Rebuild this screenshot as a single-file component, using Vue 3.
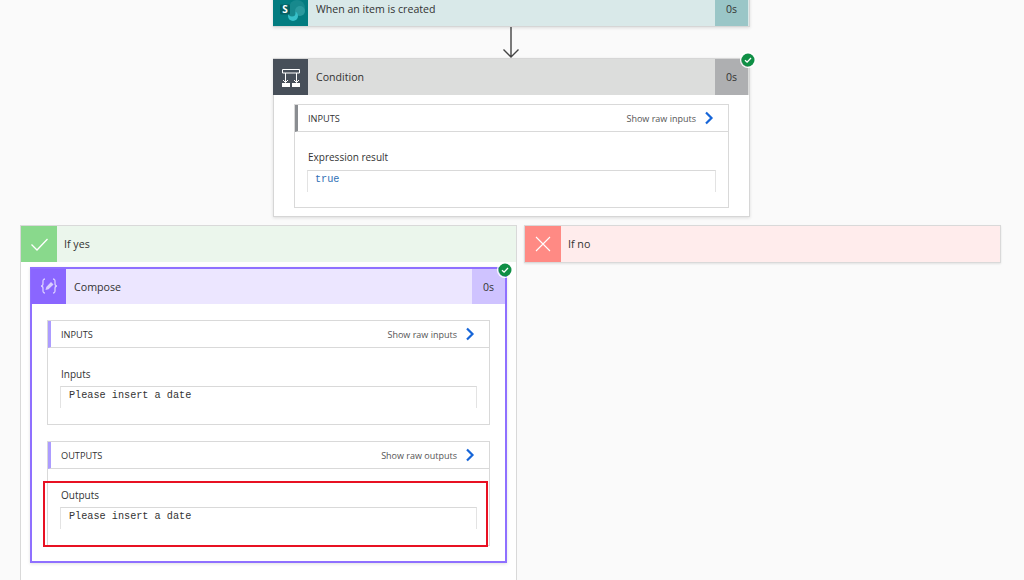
<script setup>
const composeSections = [
  { title: 'INPUTS', raw: 'Show raw inputs', label: 'Inputs', value: 'Please insert a date' },
  { title: 'OUTPUTS', raw: 'Show raw outputs', label: 'Outputs', value: 'Please insert a date' }
]
</script>

<template>
  <main class="canvas">
    <section class="card trigger">
      <header class="head">
        <div class="icon">
          <svg width="36" height="36" viewBox="0 0 36 36">
            <circle cx="24" cy="17" r="8" fill="#17898d"/>
            <circle cx="27" cy="20" r="5" fill="#2a9a9e"/>
            <circle cx="20" cy="25" r="5" fill="#37c0c8"/>
            <circle cx="19" cy="22" r="3.500" fill="#17898d"/>
            <rect x="7" y="13.500" width="10" height="10" rx="1" fill="#045f62"/>
            <text x="12" y="22" class="s-glyph">S</text>
          </svg>
        </div>
        <span class="name">When an item is created</span>
        <span class="time">0s</span>
      </header>
    </section>

    <div class="arrow">
      <svg width="18" height="31" viewBox="0 0 18 31">
        <path d="M9 0V30M1.500 22.500L9 30L16.500 22.500" fill="none" stroke="#444" stroke-width="1.400"/>
      </svg>
    </div>

    <section class="card condition">
      <header class="head">
        <div class="icon">
          <svg width="36" height="36" viewBox="0 0 36 36">
            <path d="M9.500 10.500H26.500V14H9.500Z" fill="none" stroke="#fff" stroke-width="1"/>
            <path d="M12.500 14V23.500M23.500 14V23.500M10 21L12.500 23.500L15 21M21 21L23.500 23.500L26 21" fill="none" stroke="#fff" stroke-width="1"/>
            <path d="M9 24H17V28H9ZM19 24H27V28H19Z" fill="#fff"/>
          </svg>
        </div>
        <span class="name">Condition</span>
        <span class="time">0s</span>
      </header>
      <span class="badge">
        <svg width="14" height="14" viewBox="0 0 14 14"><circle cx="7" cy="7" r="6.500" fill="#0f8f45"/><path d="M4 7.200L6.100 9.200L10 5" fill="none" stroke="#fff" stroke-width="1.300"/></svg>
      </span>
      <div class="body cond-body">
        <div class="section">
          <div class="sec-head">
            <span class="sec-title">INPUTS</span>
            <span class="raw">Show raw inputs</span>
            <svg class="chev" width="10" height="14" viewBox="0 0 10 14"><path d="M2 1.500L7.500 7L2 12.500" fill="none" stroke="#1665d8" stroke-width="2.200"/></svg>
          </div>
          <div class="sec-body">
            <div class="label">Expression result</div>
            <div class="value true">true</div>
          </div>
        </div>
      </div>
    </section>

    <div class="branches">
      <section class="branch yes">
        <header class="branch-head">
          <div class="branch-icon">
            <svg width="36" height="36" viewBox="0 0 36 36"><path d="M10.500 18.500L16 24L26.500 13" fill="none" stroke="#fff" stroke-width="1.300"/></svg>
          </div>
          <span class="name">If yes</span>
        </header>
        <div class="branch-body">
          <section class="card compose">
            <header class="head">
              <div class="icon">
                <svg width="36" height="36" viewBox="0 0 36 36">
                  <path d="M14 10C11.500 10 12 12.500 12 14.500C12 16.500 11.500 17 10 17C11.500 17 12 17.500 12 19.500C12 21.500 11.500 24 14 24M22 10C24.500 10 24 12.500 24 14.500C24 16.500 24.500 17 26 17C24.500 17 24 17.500 24 19.500C24 21.500 24.500 24 22 24" fill="none" stroke="#d9ceff" stroke-width="1.300"/>
                  <path d="M14.500 21L15.300 18L20 13L22.500 15.500L17.500 20.300Z" fill="#d9ceff"/>
                </svg>
              </div>
              <span class="name">Compose</span>
              <span class="time">0s</span>
            </header>
            <span class="badge">
              <svg width="14" height="14" viewBox="0 0 14 14"><circle cx="7" cy="7" r="6.500" fill="#0f8f45"/><path d="M4 7.200L6.100 9.200L10 5" fill="none" stroke="#fff" stroke-width="1.300"/></svg>
            </span>
            <div class="body compose-body">
              <div v-for="s in composeSections" :key="s.title" class="section">
                <div class="sec-head">
                  <span class="sec-title">{{ s.title }}</span>
                  <span class="raw">{{ s.raw }}</span>
                  <svg class="chev" width="10" height="14" viewBox="0 0 10 14"><path d="M2 1.500L7.500 7L2 12.500" fill="none" stroke="#1665d8" stroke-width="2.200"/></svg>
                </div>
                <div class="sec-body">
                  <div class="label">{{ s.label }}</div>
                  <div class="value">{{ s.value }}</div>
                </div>
              </div>
              <div class="highlight"></div>
            </div>
          </section>
        </div>
      </section>

      <section class="branch no">
        <header class="branch-head">
          <div class="branch-icon">
            <svg width="36" height="36" viewBox="0 0 36 36"><path d="M11 11L25 25M25 11L11 25" fill="none" stroke="#fff" stroke-width="1.100"/></svg>
          </div>
          <span class="name">If no</span>
        </header>
      </section>
    </div>
  </main>
</template>

<style>
html, body { margin: 0; background: #fafafa; }
</style>

<style scoped>
.canvas {
  width: 1024px;
  height: 580px;
  overflow: hidden;
  background: #fafafa;
  display: flex;
  flex-direction: column;
  font-family: "Open Sans", "Noto Sans", sans-serif;
  color: #333;
}
.card {
  position: relative;
  box-sizing: border-box;
  background: #fff;
  border: 1px solid #d6d6d6;
  box-shadow: 0 1px 3px rgba(0, 0, 0, 0.12);
}
.trigger, .condition {
  width: 477px;
  margin-left: 273px;
  flex: none;
}
.trigger { margin-top: -10px; }
.head {
  display: flex;
  align-items: center;
  height: 35px;
}
.condition .head { height: 36px; }
.icon {
  width: 35px;
  height: 100%;
  flex: none;
  overflow: hidden;
  margin-left: -1px;
}
.name {
  margin-left: 8px;
  font-size: 10.600px;
  flex: 1;
}
.time {
  width: 33px;
  height: 100%;
  flex: none;
  display: flex;
  align-items: center;
  justify-content: center;
  font-size: 10.500px;
  margin-right: 1px;
}
.trigger .head { background: #d9e9e9; }
.trigger .icon { background: #037c80; }
.trigger .time { background: #9ac6c7; }
.s-glyph { fill: #fff; font-size: 10px; font-weight: 700; text-anchor: middle; }
.arrow {
  height: 31px;
  flex: none;
  display: flex;
  justify-content: center;
  margin-left: -2px;
}
.condition .head { background: #dcdddc; }
.condition .icon { background: #474f59; }
.condition .time { background: #aeafb1; }
.badge {
  position: absolute;
  top: -6px;
  right: -6px;
  width: 14px;
  height: 14px;
  line-height: 0;
  border-radius: 50%;
  box-shadow: 0 0 0 1px #fff;
}
.compose .badge { right: -7px; }
.body { display: flex; flex-direction: column; }
.cond-body { padding: 9px 20px 8px; }
.section {
  box-sizing: border-box;
  border: 1px solid #d9d9d9;
  height: 104px;
  flex: none;
  background: #fff;
}
.compose .section { height: 105px; }
.sec-head {
  display: flex;
  align-items: center;
  height: 26px;
  border-bottom: 1px solid #d9d9d9;
  border-left: 3px solid #8a8d91;
  padding: 0 14px 0 10px;
}
.compose .sec-head { border-left-color: #ac9cff; }
.sec-title { font-size: 9.200px; flex: 1; }
.raw { font-size: 9px; color: #555; margin-right: 8px; }
.chev { flex: none; }
.sec-body { padding: 19px 12px 0 13px; }
.cond-body .sec-body { padding-top: 18px; }
.label { font-size: 10px; line-height: 14px; margin-bottom: 5px; }
.cond-body .label { margin-bottom: 6px; }
.value {
  box-sizing: border-box;
  height: 22px;
  margin-left: -1px;
  border-top: 1px solid #d9d9d9;
  border-left: 1px solid #e3e3e3;
  border-right: 1px solid #e3e3e3;
  padding: 3px 0 0 8px;
  font-family: "Liberation Mono", monospace;
  font-size: 10.200px;
  line-height: 12px;
  color: #333;
}
.true { color: #2f6fb5; padding-left: 7px; }
.branches {
  display: flex;
  gap: 7px;
  margin-top: 8px;
  margin-left: 20px;
  flex: none;
  align-items: flex-start;
}
.branch {
  box-sizing: border-box;
  width: 497px;
  border: 1px solid #d9d9d9;
}
.branch.no {
  width: 477px;
  box-shadow: 0 1px 2px rgba(0, 0, 0, 0.1);
}
.branch-head {
  display: flex;
  align-items: center;
  height: 36px;
}
.branch-icon { width: 36px; height: 36px; flex: none; }
.yes .branch-head { background: #ebf6ec; }
.yes .branch-icon { background: #89d98c; }
.no .branch-head { background: #ffecec; }
.no .branch-icon { background: #ff8a84; }
.branch .name { font-size: 10.700px; margin-left: 7px; }
.branch-body {
  background: #fff;
  padding: 5px 9px 20px;
}
.compose {
  width: 477px;
  border: 2px solid #8f70ff;
}
.compose .head {
  height: 35px;
  background: #ece6ff;
}
.compose .icon { background: #8a66ff; }
.compose .name { margin-left: 8px; }
.compose .time { background: #cfc3ff; margin-right: 0; }
.compose-body {
  position: relative;
  padding: 16px 15px 15px;
  gap: 16px;
}
.highlight {
  position: absolute;
  left: 11px;
  top: 177px;
  width: 445px;
  height: 66px;
  box-sizing: border-box;
  border: 2px solid #e81123;
}
</style>
